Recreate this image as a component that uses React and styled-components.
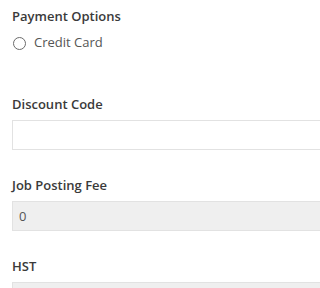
import React from "react"
import styled, { createGlobalStyle } from "styled-components"

const GlobalStyle = createGlobalStyle`
  html, body {
    margin: 0;
    padding: 0;
    background: #fff;
    overflow: hidden;
  }
  body {
    font-family: "Open Sans", "Noto Sans", sans-serif;
  }
`

// the fields run past the right edge in the reference, so the form clips them
const Form = styled.form`
  box-sizing: border-box;
  width: 100vw;
  height: 100vh;
  overflow: hidden;
  padding: 7px 0 0 12px;
  display: flex;
  flex-direction: column;
`

const Group = styled.div`
  display: flex;
  flex-direction: column;
  flex-shrink: 0;
  margin-bottom: ${(p) => p.$gap || 26}px;
`

const Label = styled.label`
  font-size: 13px;
  line-height: 18px;
  font-weight: 600;
  color: #3a3a3a;
  margin-bottom: ${(p) => p.$gap || 7}px;
`

const RadioRow = styled.label`
  display: flex;
  align-items: center;
  font-size: 13px;
  line-height: 18px;
  color: #555;
  cursor: pointer;
`

const RadioCircle = styled.span`
  box-sizing: border-box;
  width: 13px;
  height: 13px;
  margin: 2px 8px 0 1px;
  border: 1px solid #6b6b6b;
  border-radius: 50%;
  background: #fff;
`

const Input = styled.input`
  box-sizing: border-box;
  width: calc(100% + 20px);
  height: 30px;
  padding: 0 6px;
  border: 1px solid #e2e2e2;
  border-radius: 0;
  outline: none;
  font-family: inherit;
  font-size: 13px;
  color: #555;
  background: ${(p) => (p.readOnly ? "#efefef" : "#fff")};
`

export default function App() {
  return (
    <>
      <GlobalStyle />
      <Form onSubmit={(e) => e.preventDefault()}>
        <Group $gap={44}>
          <Label $gap={8}>Payment Options</Label>
          <RadioRow>
            <RadioCircle />
            Credit Card
          </RadioRow>
        </Group>
        <Group>
          <Label>Discount Code</Label>
          <Input type="text" />
        </Group>
        <Group>
          <Label>Job Posting Fee</Label>
          <Input type="text" value="0" readOnly />
        </Group>
        <Group>
          <Label>HST</Label>
          <Input type="text" value="" readOnly />
        </Group>
      </Form>
    </>
  )
}
